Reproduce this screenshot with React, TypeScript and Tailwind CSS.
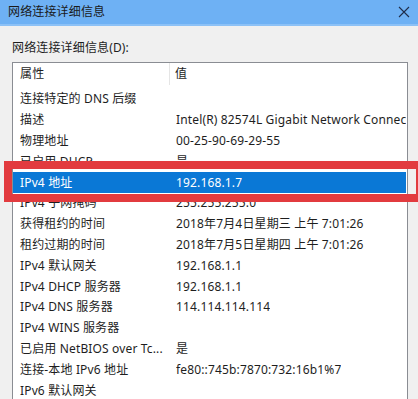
const rows: [string, string][] = [
  ['连接特定的 DNS 后缀', ''],
  ['描述', 'Intel(R) 82574L Gigabit Network Connection'],
  ['物理地址', '00-25-90-69-29-55'],
  ['已启用 DHCP', '是'],
  ['IPv4 地址', '192.168.1.7'],
  ['IPv4 子网掩码', '255.255.255.0'],
  ['获得租约的时间', '2018年7月4日星期三 上午 7:01:26'],
  ['租约过期的时间', '2018年7月5日星期四 上午 7:01:26'],
  ['IPv4 默认网关', '192.168.1.1'],
  ['IPv4 DHCP 服务器', '192.168.1.1'],
  ['IPv4 DNS 服务器', '114.114.114.114'],
  ['IPv4 WINS 服务器', ''],
  ['已启用 NetBIOS over Tc...', '是'],
  ['连接-本地 IPv6 地址', 'fe80::745b:7870:732:16b1%7'],
  ['IPv6 默认网关', ''],
];

const SELECTED = 4;

export default function App() {
  return (
    <div
      className="relative w-[418px] h-[399px] overflow-hidden bg-[#f0f0f0] text-[12px] tracking-[0.15px] text-[#1e1e1e]"
      style={{ fontFamily: '"Noto Sans", "Noto Sans CJK SC", sans-serif' }}
    >
      {/* title bar */}
      <div className="flex h-[26px] items-center justify-between bg-[#6eb1f4] pl-2 pr-[8px] border-b-2 border-[#8cc1f6]">
        <span className="text-[#1a1a1a]">网络连接详细信息</span>
        <svg width="12" height="12" viewBox="0 0 12 12" className="text-[#1f2d4a]">
          <path d="M1 1 L11 11 M11 1 L1 11" stroke="currentColor" strokeWidth="1.1" />
        </svg>
      </div>

      <div className="pl-3 pt-[14px]">
        <div className="leading-4">网络连接详细信息(D):</div>

        {/* list box */}
        <div className="mt-[6px] w-[396px] border border-[#8a8d93] bg-white">
          <div className="flex h-[22px] items-center">
            <div className="flex h-full w-[157px] items-center border-r border-[#e5e5e5] pl-[7px]">属性</div>
            <div className="pl-[5px]">值</div>
          </div>
          <div className="pt-[4px]">
            {rows.map(([name, value], i) => {
              const sel = i === SELECTED;
              return (
                <div
                  key={i}
                  className={
                    'mr-px flex h-[20.8px] items-center whitespace-nowrap ' +
                    (sel ? 'bg-[#0a78d6] text-white' : '')
                  }
                >
                  <div className="w-[163px] shrink-0 overflow-hidden pl-[7px]">{name}</div>
                  <div className="overflow-hidden">{value}</div>
                </div>
              );
            })}
          </div>
        </div>
      </div>

      {/* red highlight annotation */}
      <div className="absolute left-[4px] top-[161px] h-[41px] w-[420px] border-[8px] border-[#e23b3f]" />
    </div>
  );
}
